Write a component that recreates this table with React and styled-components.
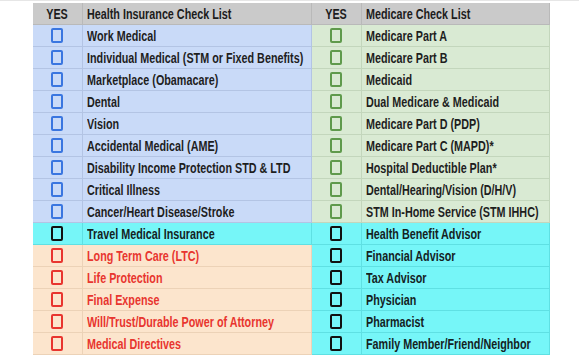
import styled, { createGlobalStyle } from 'styled-components';

const GlobalStyle = createGlobalStyle`
  body{
    margin: 0;
    background: #fff;
    font-family: "Liberation Sans Narrow", "Liberation Sans", Arial, sans-serif;
  }
`;

const tones = {
  head: { bg: '#cacaca', line: '#b9b9b9', text: '#1c1c1c', box: '#1c1c1c' },
  blue: { bg: '#c9daf8', line: '#b3c4e4', text: '#1e1e1e', box: '#3a76e0' },
  green: { bg: '#d9ead3', line: '#c3d6bc', text: '#1e1e1e', box: '#5f9a4c' },
  cyan: { bg: '#76f6f8', line: '#5fe0e3', text: '#14221f', box: '#111' },
  orange: { bg: '#fce5cd', line: '#ecd2b7', text: '#e8352f', box: '#e8352f' },
};

const Page = styled.div`
  padding: 2px 0 0 33px;
  border-top: 1px solid #e6e6e6;
`;

const Table = styled.div`
  display: grid;
  grid-template-columns: 50px 229px 50px 188px;
  width: 517px;
`;

const Cell = styled.div`
  height: 22px;
  box-sizing: border-box;
  display: flex;
  align-items: center;
  justify-content: ${({ $center }) => ($center ? 'center' : 'flex-start')};
  padding-left: ${({ $center }) => ($center ? '0' : '4px')};
  background: ${({ $tone }) => tones[$tone].bg};
  color: ${({ $tone }) => tones[$tone].text};
  border-bottom: 1px solid ${({ $tone }) => tones[$tone].line};
  border-right: 1px solid ${({ $tone }) => tones[$tone].line};
  font-size: 14px;
  font-weight: 700;
  white-space: nowrap;
  overflow: hidden;
`;

const Label = styled.span`
  display: inline-block;
  transform: scaleX(0.77);
  transform-origin: left center;
`;

const Yes = styled(Label)`
  transform-origin: center center;
`;

const Box = styled.span`
  display: block;
  width: 12px;
  height: 15px;
  box-sizing: border-box;
  border: 2px solid ${({ $tone }) => tones[$tone].box};
  border-radius: 2px;
  margin-left: -2px;
`;

const left = [
  ['Work Medical', 'blue'],
  ['Individual Medical (STM or Fixed Benefits)', 'blue'],
  ['Marketplace (Obamacare)', 'blue'],
  ['Dental', 'blue'],
  ['Vision', 'blue'],
  ['Accidental Medical (AME)', 'blue'],
  ['Disability Income Protection STD & LTD', 'blue'],
  ['Critical Illness', 'blue'],
  ['Cancer/Heart Disease/Stroke', 'blue'],
  ['Travel Medical Insurance', 'cyan'],
  ['Long Term Care (LTC)', 'orange'],
  ['Life Protection', 'orange'],
  ['Final Expense', 'orange'],
  ['Will/Trust/Durable Power of Attorney', 'orange'],
  ['Medical Directives', 'orange'],
];

const right = [
  'Medicare Part A',
  'Medicare Part B',
  'Medicaid',
  'Dual Medicare & Medicaid',
  'Medicare Part D (PDP)',
  'Medicare Part C (MAPD)*',
  'Hospital Deductible Plan*',
  'Dental/Hearing/Vision (D/H/V)',
  'STM In-Home Service (STM IHHC)',
  'Health Benefit Advisor',
  'Financial Advisor',
  'Tax Advisor',
  'Physician',
  'Pharmacist',
  'Family Member/Friend/Neighbor',
];

function App() {
  return (
    <>
      <GlobalStyle />
      <Page>
        <Table>
          <Cell $tone="head" $center><Yes>YES</Yes></Cell>
          <Cell $tone="head"><Label>Health Insurance Check List</Label></Cell>
          <Cell $tone="head" $center><Yes>YES</Yes></Cell>
          <Cell $tone="head"><Label>Medicare Check List</Label></Cell>
          {left.map(([name, tone], i) => {
            const rTone = i < 9 ? 'green' : 'cyan';
            return [
              <Cell key={`a${i}`} $tone={tone} $center><Box $tone={tone} /></Cell>,
              <Cell key={`b${i}`} $tone={tone}><Label>{name}</Label></Cell>,
              <Cell key={`c${i}`} $tone={rTone} $center><Box $tone={rTone} /></Cell>,
              <Cell key={`d${i}`} $tone={rTone}><Label>{right[i]}</Label></Cell>,
            ];
          })}
        </Table>
      </Page>
    </>
  );
}

export default App;
